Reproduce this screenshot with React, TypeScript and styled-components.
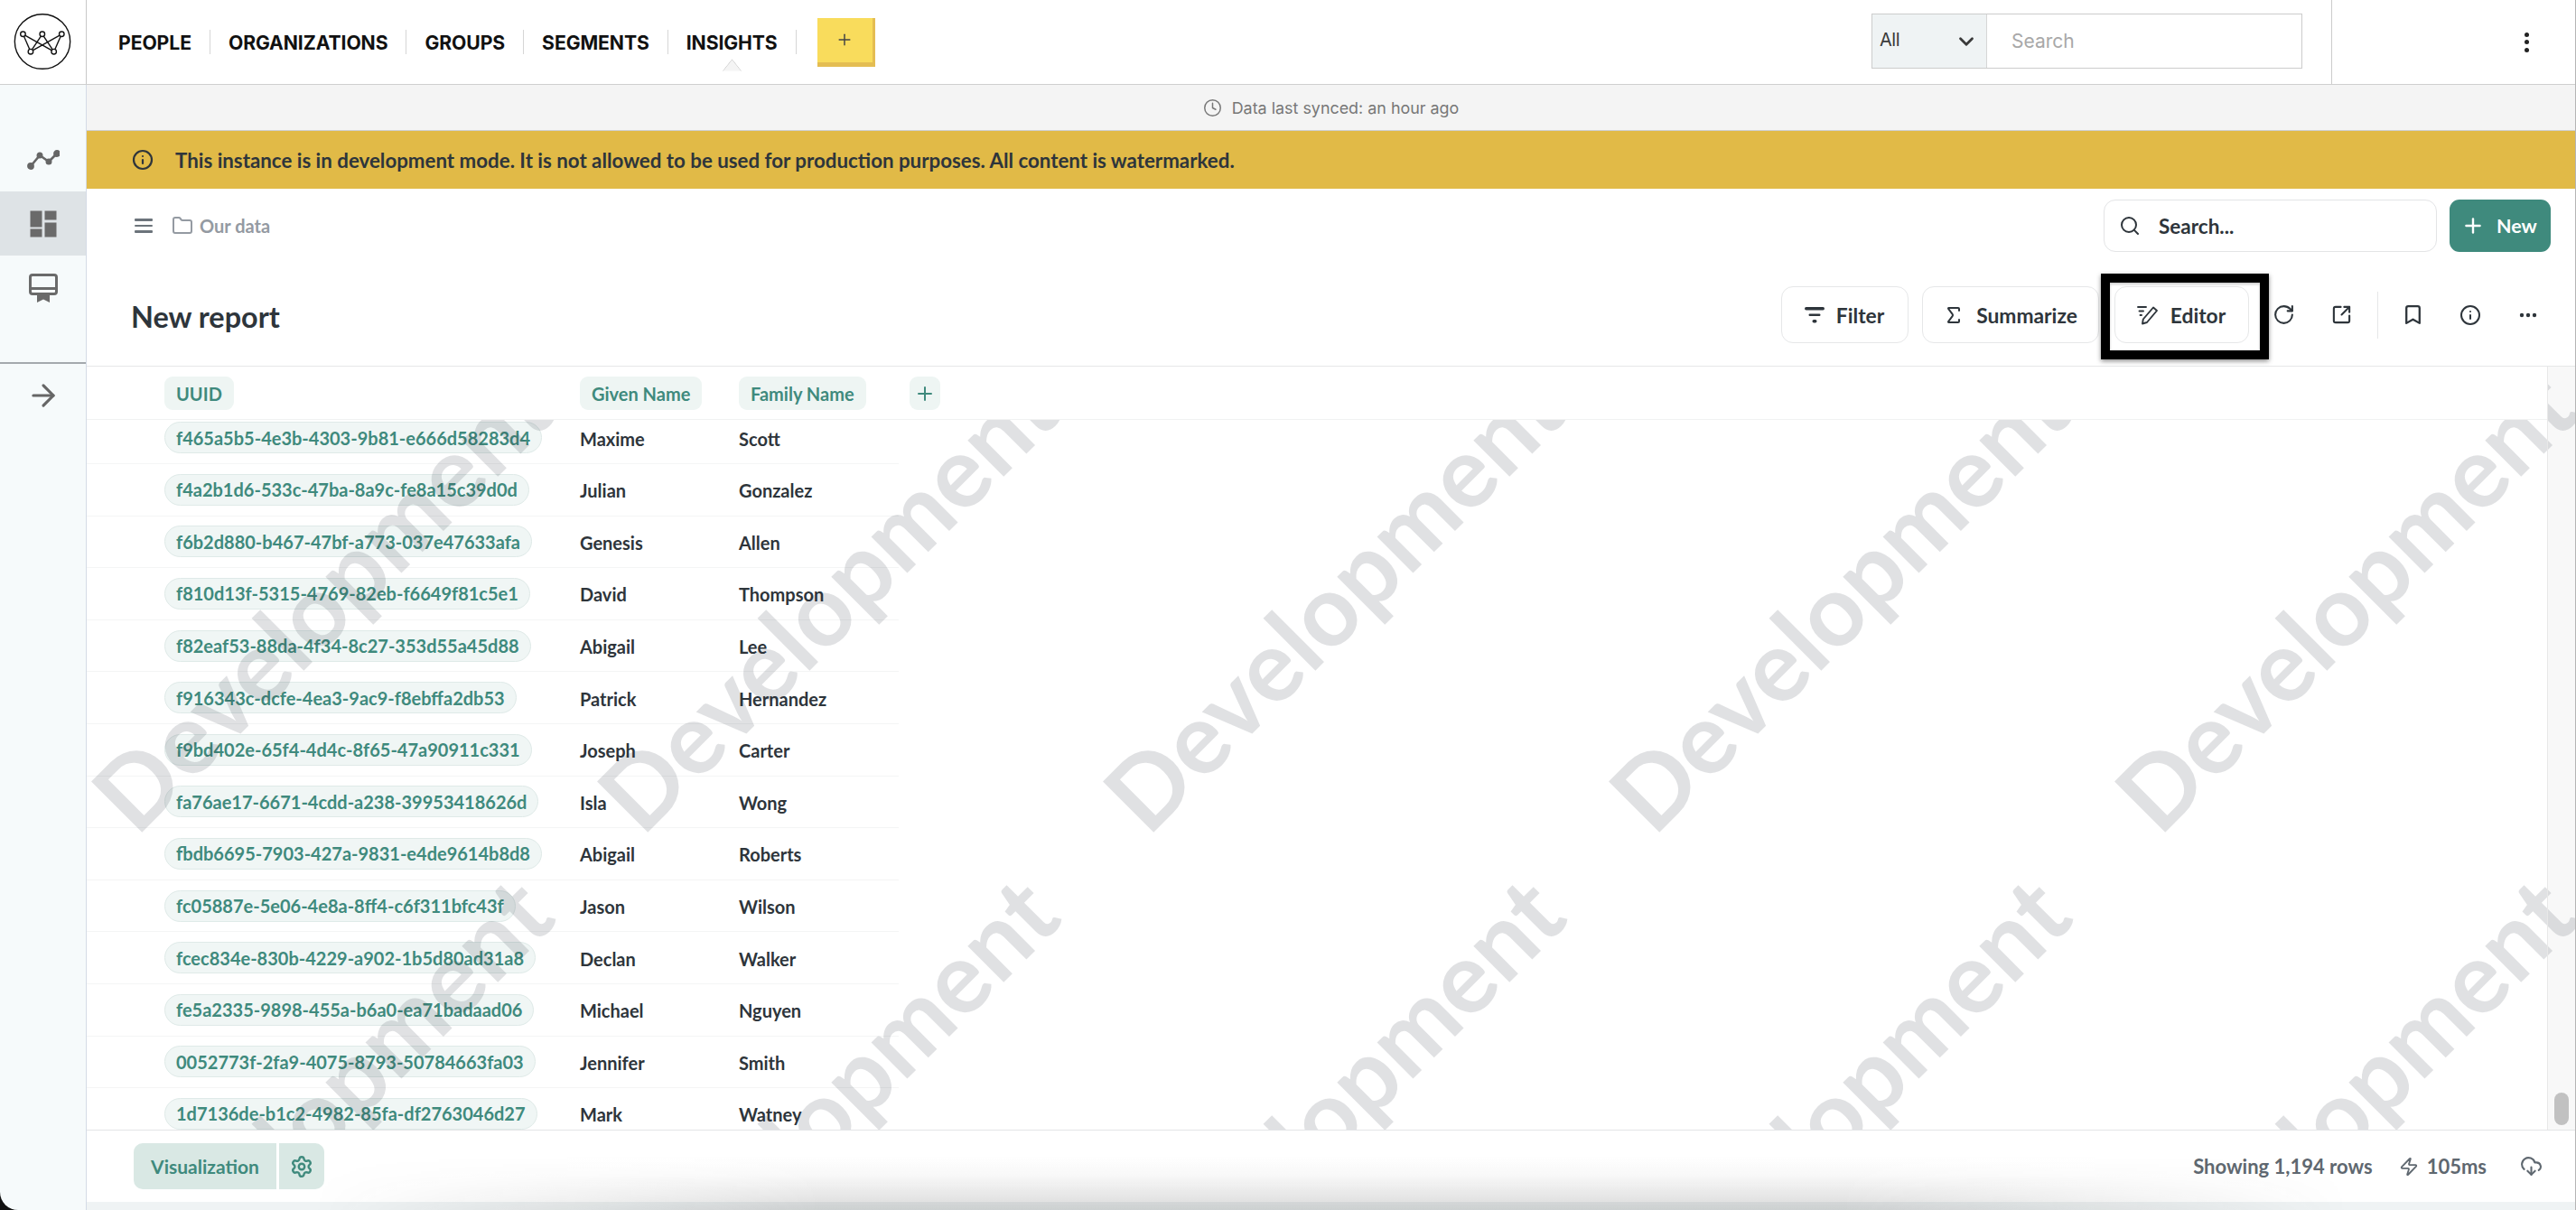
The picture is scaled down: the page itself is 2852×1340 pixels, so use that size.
import React from 'react'
import styled, { createGlobalStyle } from 'styled-components'
import {
  ArrowRight, Bookmark, ChevronDown, Clock, CloudDownload, Folder, Info, Plus, RotateCw,
  Search, Settings, Sigma, SquareArrowOutUpRight, Zap
} from 'lucide-react'

const GlobalStyle = createGlobalStyle`
  html, body { margin: 0; padding: 0; background: #111; }
  body { font-family: 'Lato', 'Liberation Sans', sans-serif; }
  * { box-sizing: border-box; }
`

const Page = styled.div`
  width: 2852px;
  height: 1340px;
  display: flex;
  flex-direction: column;
  overflow: hidden;
  background: #111;
  border-right: 1px solid #b5b5b5;
`

const TopBar = styled.header`
  height: 94px;
  flex: none;
  display: flex;
  align-items: stretch;
  background: #fff;
  border-bottom: 1.5px solid #cfcfcf;
`

const LogoCell = styled.div`
  width: 96px;
  flex: none;
  display: flex;
  align-items: center;
  justify-content: center;
  border-right: 1.5px solid #c9c9c9;
`

const Nav = styled.nav`
  display: flex;
  align-items: center;
  padding-left: 35px;
`

const NavItem = styled.div<{ $active?: boolean }>`
  position: relative;
  height: 27px;
  padding: 0 20px 0 0;
  margin-right: 20px;
  display: flex;
  align-items: center;
  font-family: 'Inter', sans-serif;
  font-weight: 700;
  font-size: 21.2px;
  letter-spacing: -0.1px;
  color: #111;
  border-right: 1.5px solid #d6d6d6;
  &::after {
    content: '';
    display: ${p => (p.$active ? 'block' : 'none')};
    position: absolute;
    left: 41px;
    top: 36px;
    width: 17px;
    height: 17px;
    background: #f4f4f4;
    border: 1.5px solid #cfcfcf;
    transform: scaleX(0.8) rotate(45deg);
    clip-path: polygon(0 0, 100% 0, 0 100%);
  }
`

const AddButton = styled.button`
  width: 64px;
  height: 54px;
  margin-left: 3px;
  padding: 0;
  display: flex;
  align-items: center;
  justify-content: center;
  border: none;
  border-right: 3px solid #e4bd52;
  border-bottom: 5px solid #e4bd52;
  background: #f9dc5c;
  color: #444;
`

const HeaderSearch = styled.div`
  margin-left: auto;
  margin-top: 15px;
  width: 477px;
  height: 61px;
  display: flex;
  border: 1.5px solid #cccccc;
  font-family: 'Inter', sans-serif;
`

const ScopeSelect = styled.div`
  width: 127px;
  display: flex;
  align-items: center;
  justify-content: space-between;
  padding: 0 9px 3px 8px;
  background: #eff3f4;
  border-right: 1.5px solid #d6d6d6;
  font-size: 20px;
  color: #3a3a3a;
  letter-spacing: -0.5px;
  svg { margin-top: 3px; }
`

const SearchPlaceholder = styled.div`
  flex: 1;
  display: flex;
  align-items: center;
  padding-left: 27px;
  font-size: 21px;
  color: #a8a8a8;
`

const KebabCell = styled.div`
  width: 270px;
  margin-left: 32px;
  flex: none;
  display: flex;
  align-items: center;
  justify-content: flex-end;
  padding-right: 51px;
  border-left: 1.5px solid #cccccc;
`

const Kebab = styled.div`
  display: flex;
  flex-direction: column;
  gap: 3.5px;
  span {
    width: 5px;
    height: 5px;
    border-radius: 50%;
    background: #222;
  }
`

const Body = styled.div`
  flex: 1;
  min-height: 0;
  display: flex;
`

const Sidebar = styled.aside`
  width: 96px;
  flex: none;
  display: flex;
  flex-direction: column;
  padding-top: 47px;
  background: #f6fafb;
  border-right: 1.5px solid #d4dbe6;
  border-bottom-left-radius: 20px;
`

const SideItem = styled.div<{ $active?: boolean }>`
  height: 71px;
  display: flex;
  align-items: center;
  justify-content: center;
  background: ${p => (p.$active ? '#dee3e6' : 'transparent')};
`

const SideRule = styled.div`
  margin-top: 47px;
  height: 2px;
  background: #a4a9ad;
`

const SideArrow = styled.div`
  height: 70px;
  display: flex;
  align-items: center;
  justify-content: center;
  color: #666;
`

const Main = styled.main`
  flex: 1;
  min-width: 0;
  display: flex;
  flex-direction: column;
  background: #fff;
  position: relative;
`

const SyncBar = styled.div`
  height: 51px;
  flex: none;
  display: flex;
  align-items: center;
  justify-content: center;
  gap: 11px;
  background: #f4f4f4;
  border-bottom: 1.5px solid #cfcfcf;
  font-family: 'Inter', sans-serif;
  font-size: 17.9px;
  color: #777;
`

const Banner = styled.div`
  height: 64px;
  flex: none;
  display: flex;
  align-items: center;
  gap: 24px;
  padding-left: 50px;
  background: #e1ba47;
  font-weight: 700;
  font-size: 22.3px;
  color: #2e353b;
`

const CrumbRow = styled.div`
  height: 91px;
  flex: none;
  display: flex;
  align-items: flex-start;
  padding: 12px 27px 0 53px;
`

const Crumbs = styled.div`
  height: 58px;
  display: flex;
  align-items: center;
  font-weight: 700;
  font-size: 20px;
  color: #949aa2;
`

const Hamburger = styled.div`
  width: 20px;
  margin-right: 21px;
  display: flex;
  flex-direction: column;
  gap: 3.6px;
  span {
    height: 2.8px;
    border-radius: 1px;
    background: #6c747b;
  }
`

const CrumbLabel = styled.span`
  margin-left: 7px;
`

const CollectionSearch = styled.div`
  margin-left: auto;
  width: 369px;
  height: 58px;
  display: flex;
  align-items: center;
  gap: 20px;
  padding-left: 16px;
  border: 1.5px solid #e3e4e6;
  border-radius: 13px;
  font-weight: 700;
  font-size: 22.5px;
  color: #2e353b;
`

const NewButton = styled.button`
  width: 112px;
  height: 58px;
  margin-left: 14px;
  display: flex;
  align-items: center;
  gap: 13px;
  padding: 0 0 0 13px;
  border: none;
  border-radius: 11px;
  background: #3f8a7d;
  font-family: inherit;
  font-weight: 700;
  font-size: 21.5px;
  color: #fff;
`

const TitleRow = styled.div`
  height: 106px;
  flex: none;
  display: flex;
  align-items: flex-start;
  padding: 17px 20px 0 49px;
  border-bottom: 1.5px solid #e6e7e8;
`

const Title = styled.h1`
  margin: 0;
  height: 63px;
  display: flex;
  align-items: center;
  padding-top: 3px;
  font-weight: 700;
  font-size: 32.4px;
  color: #2e353b;
`

const Actions = styled.div`
  margin-left: auto;
  display: flex;
  align-items: center;
`

const ActionButton = styled.button<{ $width: number; $gap?: number }>`
  position: relative;
  width: ${p => p.$width}px;
  height: 63px;
  margin-right: ${p => p.$gap ?? 0}px;
  display: flex;
  align-items: center;
  justify-content: center;
  gap: 13px;
  padding: 0;
  background: #fff;
  border: 1.5px solid #e6e7e8;
  border-radius: 13px;
  font-family: inherit;
  font-weight: 700;
  font-size: 22.8px;
  color: #2e353b;
`

const Highlight = styled.div`
  position: absolute;
  left: -16px;
  top: -15px;
  width: 186px;
  height: 95px;
  border: 10px solid #000;
  box-shadow: 0 2px 5px rgba(0, 0, 0, 0.45), inset 0 2px 3px rgba(0, 0, 0, 0.2);
  pointer-events: none;
`

const IconAction = styled.div`
  width: 64px;
  height: 63px;
  display: flex;
  align-items: center;
  justify-content: center;
  color: #2e353b;
`

const ActionDivider = styled.div`
  width: 1.5px;
  height: 52px;
  margin: 0 6px 0 7px;
  background: #e6e7e8;
`

const TableArea = styled.section`
  position: relative;
  flex: 1;
  min-height: 0;
  overflow: hidden;
  background: #fff;
`

const HeaderRow = styled.div`
  position: relative;
  z-index: 2;
  height: 59px;
  display: grid;
  grid-template-columns: 460px 176px 189px 60px;
  align-items: start;
  padding: 11px 0 0 86px;
  margin-right: 31px;
  background: #fff;
  border-bottom: 1.5px solid #f1f2f2;
`

const HeaderPill = styled.div`
  justify-self: start;
  height: 37px;
  display: flex;
  align-items: center;
  padding: 0 13px;
  background: #eef5f3;
  border-radius: 9px;
  font-weight: 700;
  font-size: 20px;
  color: #3f8a7d;
`

const AddColumn = styled(HeaderPill)`
  width: 34px;
  padding: 0;
  justify-content: center;
`

const Rows = styled.div`
  width: 899px;
  margin-top: -8.6px;
`

const Row = styled.div`
  height: 57.6px;
  display: grid;
  grid-template-columns: 460px 176px 177px;
  align-items: center;
  padding-left: 86px;
  border-bottom: 1.5px solid #f4f5f5;
  font-weight: 700;
  font-size: 20px;
  color: #2e353b;
`

const UuidPill = styled.div`
  justify-self: start;
  height: 35px;
  display: flex;
  align-items: center;
  padding: 0 12px;
  background: #f0f6f5;
  border: 1.5px solid #dfeae8;
  border-radius: 18px;
  white-space: nowrap;
  color: #3f8a7d;
`

const NameCell = styled.div`
  padding-top: 2px;
`

const WatermarkLayer = styled.svg`
  position: absolute;
  left: 0;
  top: 0;
  width: 100%;
  height: 100%;
  z-index: 1;
  pointer-events: none;
  text {
    font-family: 'Lato', sans-serif;
    font-weight: 700;
    font-size: 110px;
    fill: rgba(50, 55, 65, 0.15);
  }
`

const ScrollTrack = styled.div`
  position: absolute;
  z-index: 3;
  right: 0;
  top: 0;
  bottom: 0;
  width: 31px;
  background: rgba(120, 120, 120, 0.05);
  border-left: 1.5px solid #e8e8e8;
`

const ScrollThumb = styled.div`
  position: absolute;
  left: 7px;
  bottom: 5px;
  width: 16px;
  height: 36px;
  border-radius: 8px;
  background: #c1c1c1;
`

const FooterBar = styled.footer`
  position: relative;
  height: 80px;
  flex: none;
  display: flex;
  align-items: center;
  padding: 0 36px 0 52px;
  background: #fff;
  border-top: 1.5px solid #e3e4e6;
  font-weight: 700;
  font-size: 21px;
  color: #5f6870;
`

const VizGroup = styled.div`
  display: flex;
  gap: 3px;
  height: 51px;
  color: #3f8a7d;
`

const VizButton = styled.div`
  width: 158px;
  display: flex;
  align-items: center;
  justify-content: center;
  background: #d9e8e4;
  border-radius: 10px 0 0 10px;
`

const VizSettings = styled.div`
  width: 50px;
  display: flex;
  align-items: center;
  justify-content: center;
  background: #d9e8e4;
  border-radius: 0 10px 10px 0;
`

const FooterStats = styled.div`
  position: relative;
  z-index: 1;
  margin-left: auto;
  display: flex;
  align-items: center;
  font-size: 22px;
`

const Timing = styled.div`
  margin-left: 29px;
  margin-right: 37px;
  display: flex;
  align-items: center;
  gap: 9px;
`

const BottomStrip = styled.div`
  height: 9px;
  flex: none;
  background: #eff3f4;
`

const WindowShadow = styled.div`
  position: absolute;
  left: 250px;
  right: 250px;
  bottom: 0;
  height: 60px;
  background: linear-gradient(to top, rgba(40, 40, 40, 0.17), rgba(40, 40, 40, 0.03) 65%, rgba(40, 40, 40, 0));
  -webkit-mask-image: linear-gradient(to right, transparent, #000 25%, #000 75%, transparent);
  mask-image: linear-gradient(to right, transparent, #000 25%, #000 75%, transparent);
  pointer-events: none;
`

const ROWS: [string, string, string][] = [
  ['f465a5b5-4e3b-4303-9b81-e666d58283d4', 'Maxime', 'Scott'],
  ['f4a2b1d6-533c-47ba-8a9c-fe8a15c39d0d', 'Julian', 'Gonzalez'],
  ['f6b2d880-b467-47bf-a773-037e47633afa', 'Genesis', 'Allen'],
  ['f810d13f-5315-4769-82eb-f6649f81c5e1', 'David', 'Thompson'],
  ['f82eaf53-88da-4f34-8c27-353d55a45d88', 'Abigail', 'Lee'],
  ['f916343c-dcfe-4ea3-9ac9-f8ebffa2db53', 'Patrick', 'Hernandez'],
  ['f9bd402e-65f4-4d4c-8f65-47a90911c331', 'Joseph', 'Carter'],
  ['fa76ae17-6671-4cdd-a238-39953418626d', 'Isla', 'Wong'],
  ['fbdb6695-7903-427a-9831-e4de9614b8d8', 'Abigail', 'Roberts'],
  ['fc05887e-5e06-4e8a-8ff4-c6f311bfc43f', 'Jason', 'Wilson'],
  ['fcec834e-830b-4229-a902-1b5d80ad31a8', 'Declan', 'Walker'],
  ['fe5a2335-9898-455a-b6a0-ea71badaad06', 'Michael', 'Nguyen'],
  ['0052773f-2fa9-4075-8793-50784663fa03', 'Jennifer', 'Smith'],
  ['1d7136de-b1c2-4982-85fa-df2763046d27', 'Mark', 'Watney']
]

const NAV_ITEMS = ['PEOPLE', 'ORGANIZATIONS', 'GROUPS', 'SEGMENTS', 'INSIGHTS']

function Logo () {
  const top: [number, number][] = [[25.7, 37.7], [47.3, 37.7], [69, 37.7]]
  const bottom: [number, number][] = [[34.3, 57.3], [60.3, 57.3]]
  return (
    <svg width="96" height="93" viewBox="0 0 96 93" fill="none" stroke="#111" strokeWidth="1.4">
      <ellipse cx="47.5" cy="46" rx="31" ry="30.6" />
      {top.map(a => bottom.map(b => <line key={`${a[0]}-${b[0]}`} x1={a[0]} y1={a[1]} x2={b[0]} y2={b[1]} />))}
      {[...top, ...bottom].map(n => <circle key={n[0]} cx={n[0]} cy={n[1]} r="2.8" fill="#fff" />)}
    </svg>
  )
}

function TrendIcon () {
  return (
    <svg width="36" height="24" viewBox="0 0 36 24" fill="none" stroke="#666" strokeWidth="2.6">
      <polyline points="4,19 14,7 24,14 33,5" strokeLinecap="round" strokeLinejoin="round" />
      <circle cx="4" cy="19" r="2.6" fill="#666" />
      <circle cx="14" cy="7" r="2.2" fill="#666" />
      <circle cx="24" cy="14" r="2.2" fill="#666" />
      <circle cx="33" cy="5" r="2.6" fill="#666" />
    </svg>
  )
}

function DashboardIcon () {
  return (
    <svg width="30" height="30" viewBox="0 0 30 30" fill="#6a6a6a">
      <rect x="0.5" y="0.5" width="13" height="18" />
      <rect x="0.5" y="20.5" width="13" height="9" />
      <rect x="16.5" y="0.5" width="13" height="10" />
      <rect x="16.5" y="13.5" width="13" height="16" />
    </svg>
  )
}

function ReportIcon () {
  return (
    <svg width="32" height="32" viewBox="0 0 32 32" fill="none">
      <rect x="1.5" y="1.5" width="29" height="21" rx="2.5" stroke="#6a6a6a" strokeWidth="3" />
      <rect x="1.5" y="15" width="29" height="3" fill="#6a6a6a" />
      <path d="M9 23 H23 V32 L16 28.6 L9 32 Z" fill="#6a6a6a" />
    </svg>
  )
}

function FilterIcon () {
  return (
    <svg width="22" height="20" viewBox="0 0 22 20" fill="#2e353b">
      <rect x="0" y="1" width="22" height="3.4" rx="1.7" />
      <rect x="4.5" y="8.5" width="13" height="2.4" rx="1.2" />
      <rect x="8.5" y="15" width="5" height="3.4" rx="1.7" />
    </svg>
  )
}

function EditorIcon () {
  return (
    <svg width="24" height="22" viewBox="0 0 24 22" fill="none" stroke="#2e353b" strokeWidth="1.9" strokeLinecap="round" strokeLinejoin="round">
      <path d="M1 2 H10" />
      <path d="M2.5 6.5 H7" />
      <path d="M3.5 11 H5" />
      <path d="M18 2.5 L22 6 L11 19 L6 20.5 L6.8 15.5 Z" />
    </svg>
  )
}

function Watermarks () {
  const marks: [number, number][] = []
  for (let i = -2; i < 5; i++) {
    for (let j = -2; j < 2; j++) {
      const x = 1175 + 560 * i
      const y = 522 + 560 * j
      // skip tiles that don't touch the table at all
      if (x + 460 > 0 && x < 2756 && y > 0 && y - 460 < 845) marks.push([x, y])
    }
  }
  return (
    <WatermarkLayer>
      {marks.map(([x, y]) => (
        <text key={`${x}-${y}`} x={x} y={y} transform={`rotate(-45 ${x} ${y})`}>Development</text>
      ))}
    </WatermarkLayer>
  )
}

export default function App () {
  return (
    <Page>
      <GlobalStyle />
      <TopBar>
        <LogoCell><Logo /></LogoCell>
        <Nav>
          {NAV_ITEMS.map(item => <NavItem key={item} $active={item === 'INSIGHTS'}>{item}</NavItem>)}
          <AddButton><Plus size={20} strokeWidth={1.8} /></AddButton>
        </Nav>
        <HeaderSearch>
          <ScopeSelect>All<ChevronDown size={26} strokeWidth={2.6} /></ScopeSelect>
          <SearchPlaceholder>Search</SearchPlaceholder>
        </HeaderSearch>
        <KebabCell><Kebab><span /><span /><span /></Kebab></KebabCell>
      </TopBar>
      <Body>
        <Sidebar>
          <SideItem><TrendIcon /></SideItem>
          <SideItem $active><DashboardIcon /></SideItem>
          <SideItem><ReportIcon /></SideItem>
          <SideRule />
          <SideArrow><ArrowRight size={38} strokeWidth={2} /></SideArrow>
        </Sidebar>
        <Main>
          <SyncBar><Clock size={21} strokeWidth={1.7} />Data last synced: an hour ago</SyncBar>
          <Banner><Info size={24} strokeWidth={2.2} />This instance is in development mode. It is not allowed to be used for production purposes. All content is watermarked.</Banner>
          <CrumbRow>
            <Crumbs>
              <Hamburger><span /><span /><span /></Hamburger>
              <Folder size={24} strokeWidth={2} />
              <CrumbLabel>Our data</CrumbLabel>
            </Crumbs>
            <CollectionSearch><Search size={24} strokeWidth={2} />Search...</CollectionSearch>
            <NewButton><Plus size={26} strokeWidth={2.2} />New</NewButton>
          </CrumbRow>
          <TitleRow>
            <Title>New report</Title>
            <Actions>
              <ActionButton $width={141} $gap={15}><FilterIcon />Filter</ActionButton>
              <ActionButton $width={196} $gap={17}><Sigma size={24} strokeWidth={2} />Summarize</ActionButton>
              <ActionButton $width={149} $gap={7}>
                <EditorIcon />Editor
                <Highlight />
              </ActionButton>
              <IconAction><RotateCw size={25} strokeWidth={2} /></IconAction>
              <IconAction><SquareArrowOutUpRight size={23} strokeWidth={2.2} /></IconAction>
              <ActionDivider />
              <IconAction><Bookmark size={25} strokeWidth={2.2} /></IconAction>
              <IconAction><Info size={24} strokeWidth={2} /></IconAction>
              <IconAction><svg width="20" height="6" viewBox="0 0 20 6" fill="#2e353b"><circle cx="3" cy="3" r="2.2" /><circle cx="10" cy="3" r="2.2" /><circle cx="17" cy="3" r="2.2" /></svg></IconAction>
            </Actions>
          </TitleRow>
          <TableArea>
            <HeaderRow>
              <HeaderPill>UUID</HeaderPill>
              <HeaderPill>Given Name</HeaderPill>
              <HeaderPill>Family Name</HeaderPill>
              <AddColumn><Plus size={24} strokeWidth={2} /></AddColumn>
            </HeaderRow>
            <Watermarks />
            <Rows>
              {ROWS.map(([uuid, given, family]) => (
                <Row key={uuid}>
                  <UuidPill>{uuid}</UuidPill>
                  <NameCell>{given}</NameCell>
                  <NameCell>{family}</NameCell>
                </Row>
              ))}
            </Rows>
            <ScrollTrack><ScrollThumb /></ScrollTrack>
          </TableArea>
          <FooterBar>
            <VizGroup>
              <VizButton>Visualization</VizButton>
              <VizSettings><Settings size={26} strokeWidth={2.2} /></VizSettings>
            </VizGroup>
            <FooterStats>
              Showing 1,194 rows
              <Timing><Zap size={22} strokeWidth={2} />105ms</Timing>
              <CloudDownload size={25} strokeWidth={2} />
            </FooterStats>
          </FooterBar>
          <BottomStrip />
          <WindowShadow />
        </Main>
      </Body>
    </Page>
  )
}
